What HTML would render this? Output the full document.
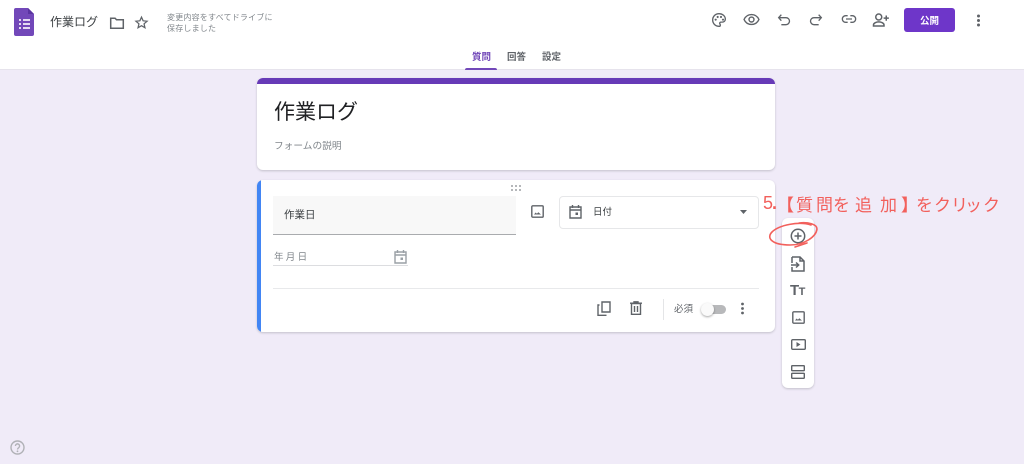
<!DOCTYPE html>
<html lang="ja"><head><meta charset="utf-8"><style>
html,body{margin:0;padding:0}
body{width:1024px;height:464px;position:relative;overflow:hidden;background:#f0ebf8;font-family:"Liberation Sans","Noto Sans CJK JP",sans-serif;color:#202124}
.a{position:absolute;white-space:nowrap}
.i{position:absolute;fill:none;stroke:#5f6368;stroke-width:2}
.f{fill:#5f6368;stroke:none}
.card{position:absolute;background:#fff;border-radius:6px;box-shadow:0 1px 2px rgba(60,64,67,.25)}
.h{position:absolute;top:195px;font-size:17px;line-height:17px;color:#f2605c;font-family:"Noto Sans CJK JP",sans-serif;font-weight:400;white-space:nowrap}
</style></head><body>
<div class="a" style="left:0;top:0;width:1024px;height:70px;background:#fff;border-bottom:1px solid #e6e3ec;box-sizing:border-box"></div>

<svg class="a" style="left:14px;top:8px" width="21" height="28" viewBox="0 0 21 28"><path d="M2 0H14L20 6V26a2 2 0 0 1-2 2H2a2 2 0 0 1-2-2V2A2 2 0 0 1 2 0Z" fill="#7248b9"/><path d="M14 0L20 6H14Z" fill="#5a34a0"/><path d="M5 11h2v2H5zM9 11h7v2H9zM5 15h2v2H5zM9 15h7v2H9zM5 19h2v2H5zM9 19h7v2H9z" fill="#fff" opacity=".8"/></svg>
<div class="a" style="left:50px;top:13px;font-size:12px;line-height:18px;color:#3c4043">作業ログ</div>
<svg class="i" style="left:109px;top:15px" width="16" height="16" viewBox="0 0 16 16"><path stroke-width="1.500" d="M1.700 3.200h4.400l1.400 1.500h6.800v8.600H1.700Z"/></svg>
<svg class="i" style="left:134px;top:15px" width="15" height="15" viewBox="0 0 24 24"><path d="M12 3.500l2.600 5.800 6.300.6-4.800 4.200 1.400 6.200L12 17.100l-5.500 3.200 1.400-6.200-4.800-4.200 6.300-.6Z"/></svg>
<div class="a" style="left:167px;top:12px;font-size:8px;line-height:11px;color:#80868b;letter-spacing:.2px">変更内容をすべてドライブに<br>保存しました</div>

<svg class="i" style="left:711px;top:12px" width="16" height="16" viewBox="0 0 24 24"><path d="M12 2.500C6.600 2.500 2.500 6.700 2.500 12s4.200 9.500 9.500 9.500c1.300 0 2-.9 2-1.900 0-1.300-1-1.600-1-2.700 0-1 .8-1.700 1.800-1.700h2.200c2.600 0 4.500-2 4.500-4.500C21.500 6 17.300 2.500 12 2.500Z"/><circle class="f" cx="7" cy="11.500" r="1.600"/><circle class="f" cx="10" cy="7.500" r="1.600"/><circle class="f" cx="15" cy="7.500" r="1.600"/><circle class="f" cx="18" cy="11.500" r="1.600"/></svg>
<svg class="i" style="left:743px;top:11px" width="17" height="17" viewBox="0 0 24 24"><path d="M1.500 12C3.500 7.500 7.500 5 12 5s8.500 2.500 10.500 7c-2 4.500-6 7-10.500 7s-8.500-2.500-10.500-7Z"/><circle cx="12" cy="12" r="3.500"/></svg>
<svg class="i" style="left:776px;top:12px" width="16" height="16" viewBox="0 0 24 24"><path d="M8 4L4 8.500 8 13M4.500 8.500H15a5 5 0 0 1 0 10.500H8"/></svg>
<svg class="i" style="left:808px;top:12px" width="16" height="16" viewBox="0 0 24 24"><path d="M16 4l4 4.500L16 13M19.500 8.500H9a5 5 0 0 0 0 10.500h7"/></svg>
<svg class="i" style="left:841px;top:10px" width="16" height="18" viewBox="0 0 24 24"><path d="M10 7H7a5 5 0 0 0 0 10h3M14 7h3a5 5 0 0 1 0 10h-3M7.500 12h9"/></svg>
<svg class="i" style="left:872px;top:11px" width="18" height="18" viewBox="0 0 24 24"><circle cx="9" cy="8" r="4"/><path d="M2 20v-1.500c0-2.500 4-4 7-4s7 1.500 7 4V20ZM19 6v7M15.500 9.500h7"/></svg>
<div class="a" style="left:904px;top:8px;width:51px;height:24px;background:#6e36c9;border-radius:3px;color:#fff;font-size:9.500px;font-weight:700;line-height:27px;text-align:center">公開</div>
<svg class="a" style="left:976px;top:14px" width="5" height="13" viewBox="0 0 5 13"><circle cx="2.500" cy="2" r="1.500" fill="#5f6368"/><circle cx="2.500" cy="6.500" r="1.500" fill="#5f6368"/><circle cx="2.500" cy="11" r="1.500" fill="#5f6368"/></svg>

<div class="a" style="left:472px;top:51px;font-size:9.500px;line-height:13px;color:#7248b9;font-weight:700">質問</div>
<div class="a" style="left:507px;top:51px;font-size:9.500px;line-height:13px;color:#5f6368;font-weight:700">回答</div>
<div class="a" style="left:542px;top:51px;font-size:9.500px;line-height:13px;color:#5f6368;font-weight:700">設定</div>
<div class="a" style="left:465px;top:68px;width:32px;height:2px;background:#7248b9;border-radius:2px 2px 0 0"></div>

<div class="card" style="left:257px;top:78px;width:518px;height:92px;overflow:hidden"><div style="height:6px;background:#673ab7"></div></div>
<div class="a" style="left:274px;top:100px;font-size:21px;line-height:26px;color:#202124">作業ログ</div>
<div class="a" style="left:274px;top:140px;font-size:9.700px;line-height:14px;color:#80868b">フォームの説明</div>

<div class="card" style="left:257px;top:180px;width:518px;height:152px;overflow:hidden"><div style="position:absolute;left:0;top:0;bottom:0;width:4px;background:#4285f4"></div></div>
<svg class="a" style="left:511px;top:185px" width="11" height="6" viewBox="0 0 11 6"><g fill="#b5b7ba"><rect x="0" y="0" width="2" height="2"/><rect x="4" y="0" width="2" height="2"/><rect x="8" y="0" width="2" height="2"/><rect x="0" y="4" width="2" height="2"/><rect x="4" y="4" width="2" height="2"/><rect x="8" y="4" width="2" height="2"/></g></svg>
<div class="a" style="left:273px;top:196px;width:243px;height:39px;box-sizing:border-box;background:#f8f8f8;border-bottom:1px solid #a9abae"></div>
<div class="a" style="left:284px;top:208px;font-size:10.500px;line-height:14px;color:#3c4043">作業日</div>
<svg class="i" style="left:531px;top:205px" width="13" height="13" viewBox="0 0 13 13"><rect x=".8" y=".8" width="11.400" height="11.400" rx="1" stroke-width="1.400"/><path class="f" d="M3 9.500l1.700-2 1.200 1.300 1.400-1.600 2.700 2.300Z"/></svg>
<div class="a" style="left:559px;top:196px;width:200px;height:33px;border:1px solid #e6e7e9;border-radius:4px;box-sizing:border-box;background:#fff"></div>
<svg class="i" style="left:569px;top:204px" width="13" height="15" viewBox="0 0 13 15"><path stroke-width="1.400" d="M1 3h11v11H1ZM1 6h11M3.500 1v3M9.500 1v3"/><rect class="f" x="6.500" y="8.500" width="2.500" height="2.500"/></svg>
<div class="a" style="left:593px;top:206px;font-size:9.500px;line-height:13px;color:#3c4043">日付</div>
<svg class="a" style="left:740px;top:210px" width="7" height="4" viewBox="0 0 7 4"><path d="M0 0h7L3.500 4Z" fill="#5f6368"/></svg>

<div class="a" style="left:274px;top:251px;font-size:9.500px;line-height:13px;color:#80868b;letter-spacing:2.300px">年月日</div>
<div class="a" style="left:273px;top:265px;width:135px;height:1px;background:#dcdde0"></div>
<svg class="i" style="left:394px;top:249px;stroke:#9aa0a6" width="13" height="15" viewBox="0 0 13 15"><path stroke-width="1.400" d="M1 3h11v11H1ZM1 6h11M3.500 1v3M9.500 1v3"/><rect x="6.500" y="8.500" width="2.500" height="2.500" fill="#9aa0a6" stroke="none"/></svg>
<div class="a" style="left:273px;top:288px;width:486px;height:1px;background:#e8e9eb"></div>

<svg class="i" style="left:597px;top:301px" width="14" height="15" viewBox="0 0 14 15"><path stroke-width="1.400" d="M5 1h8v10H5ZM2.500 4H1v10.300h8.500"/></svg>
<svg class="i" style="left:630px;top:301px" width="12" height="14" viewBox="0 0 12 14"><path stroke-width="1.400" d="M0 2.200h12M4 2V.8h4V2M1.500 2.500h9v10.800h-9ZM4.500 5v6M7.500 5v6"/></svg>
<div class="a" style="left:663px;top:299px;width:1px;height:21px;background:#e4e5e7"></div>
<div class="a" style="left:674px;top:303px;font-size:9.500px;line-height:13px;color:#5f6368">必須</div>
<div class="a" style="left:703px;top:305px;width:23px;height:9px;background:#b8b9bb;border-radius:5px"></div>
<div class="a" style="left:701px;top:303px;width:13px;height:13px;background:#fafafa;border-radius:50%;box-shadow:0 1px 2px rgba(0,0,0,.35)"></div>
<svg class="a" style="left:740px;top:302px" width="5" height="13" viewBox="0 0 5 13"><circle cx="2.500" cy="2" r="1.400" fill="#5f6368"/><circle cx="2.500" cy="6.500" r="1.400" fill="#5f6368"/><circle cx="2.500" cy="11" r="1.400" fill="#5f6368"/></svg>

<div class="card" style="left:782px;top:218px;width:32px;height:170px"></div>
<svg class="i" style="left:790px;top:228px" width="16" height="16" viewBox="0 0 16 16"><circle cx="8" cy="8" r="6.700" stroke-width="1.500"/><path stroke-width="1.500" d="M8 4.500v7M4.500 8h7"/></svg>
<svg class="i" style="left:791px;top:256px" width="14" height="16" viewBox="0 0 14 16"><path stroke-width="1.500" d="M1 1h8l4 4v10H1V11M1 7V1M0 9h7M5 6.500L7.700 9 5 11.500M9 1v4h4"/></svg>
<div class="a" style="left:790px;top:282px;font-size:15px;font-weight:700;line-height:18px;color:#5f6368;letter-spacing:-.5px">T<span style="font-size:11px">T</span></div>
<svg class="i" style="left:792px;top:311px" width="13" height="13" viewBox="0 0 13 13"><rect x=".8" y=".8" width="11.400" height="11.400" rx="1" stroke-width="1.400"/><path class="f" d="M3 9.500l1.700-2 1.200 1.300 1.400-1.600 2.700 2.300Z"/></svg>
<svg class="i" style="left:791px;top:339px" width="15" height="11" viewBox="0 0 15 11"><rect x=".7" y=".7" width="13.600" height="9.600" rx="1" stroke-width="1.400"/><path class="f" d="M5.500 3l4 2.500-4 2.500Z"/></svg>
<svg class="i" style="left:791px;top:365px" width="14" height="14" viewBox="0 0 14 14"><rect x=".7" y=".7" width="12.600" height="5" rx=".5" stroke-width="1.400"/><rect x=".7" y="8.300" width="12.600" height="5" rx=".5" stroke-width="1.400"/></svg>

<svg class="a" style="left:766px;top:220px" width="54" height="30" viewBox="0 0 54 30"><path d="M45 5C33 1 13 5 6 12 0 18 6 25 24 25 38 25 50 17 51 9 51 4 42 2 33 3M29 27L41 23" fill="none" stroke="#f2605c" stroke-width="1.600" stroke-linecap="round"/></svg>
<span class="h" style="left:763px;font-size:18px;font-family:'Liberation Sans',sans-serif;top:194px;line-height:19px">5</span>
<span class="h" style="left:772px;font-size:18px;font-family:'Liberation Sans',sans-serif;top:194px;line-height:19px;font-weight:700">.</span>
<span class="h" style="left:777px;font-weight:700">【</span>
<span class="h" style="left:796px">質</span>
<span class="h" style="left:816px">問</span>
<span class="h" style="left:833px">を</span>
<span class="h" style="left:855px">追</span>
<span class="h" style="left:880px">加</span>
<span class="h" style="left:901px;font-weight:700">】</span>
<span class="h" style="left:916px">を</span>
<span class="h" style="left:934px">ク</span>
<span class="h" style="left:951px">リ</span>
<span class="h" style="left:965px">ッ</span>
<span class="h" style="left:983px">ク</span>

<svg class="i" style="left:10px;top:440px;stroke:#b0b1b6" width="15" height="15" viewBox="0 0 15 15"><circle cx="7.500" cy="7.500" r="6.500" stroke-width="1.400"/><path stroke-width="1.400" d="M5.400 6a2.100 2.100 0 1 1 3.300 1.700c-.8.500-1.200 1-1.200 1.800"/><circle cx="7.500" cy="11.300" r=".9" fill="#b0b1b6" stroke="none"/></svg>
</body></html>
